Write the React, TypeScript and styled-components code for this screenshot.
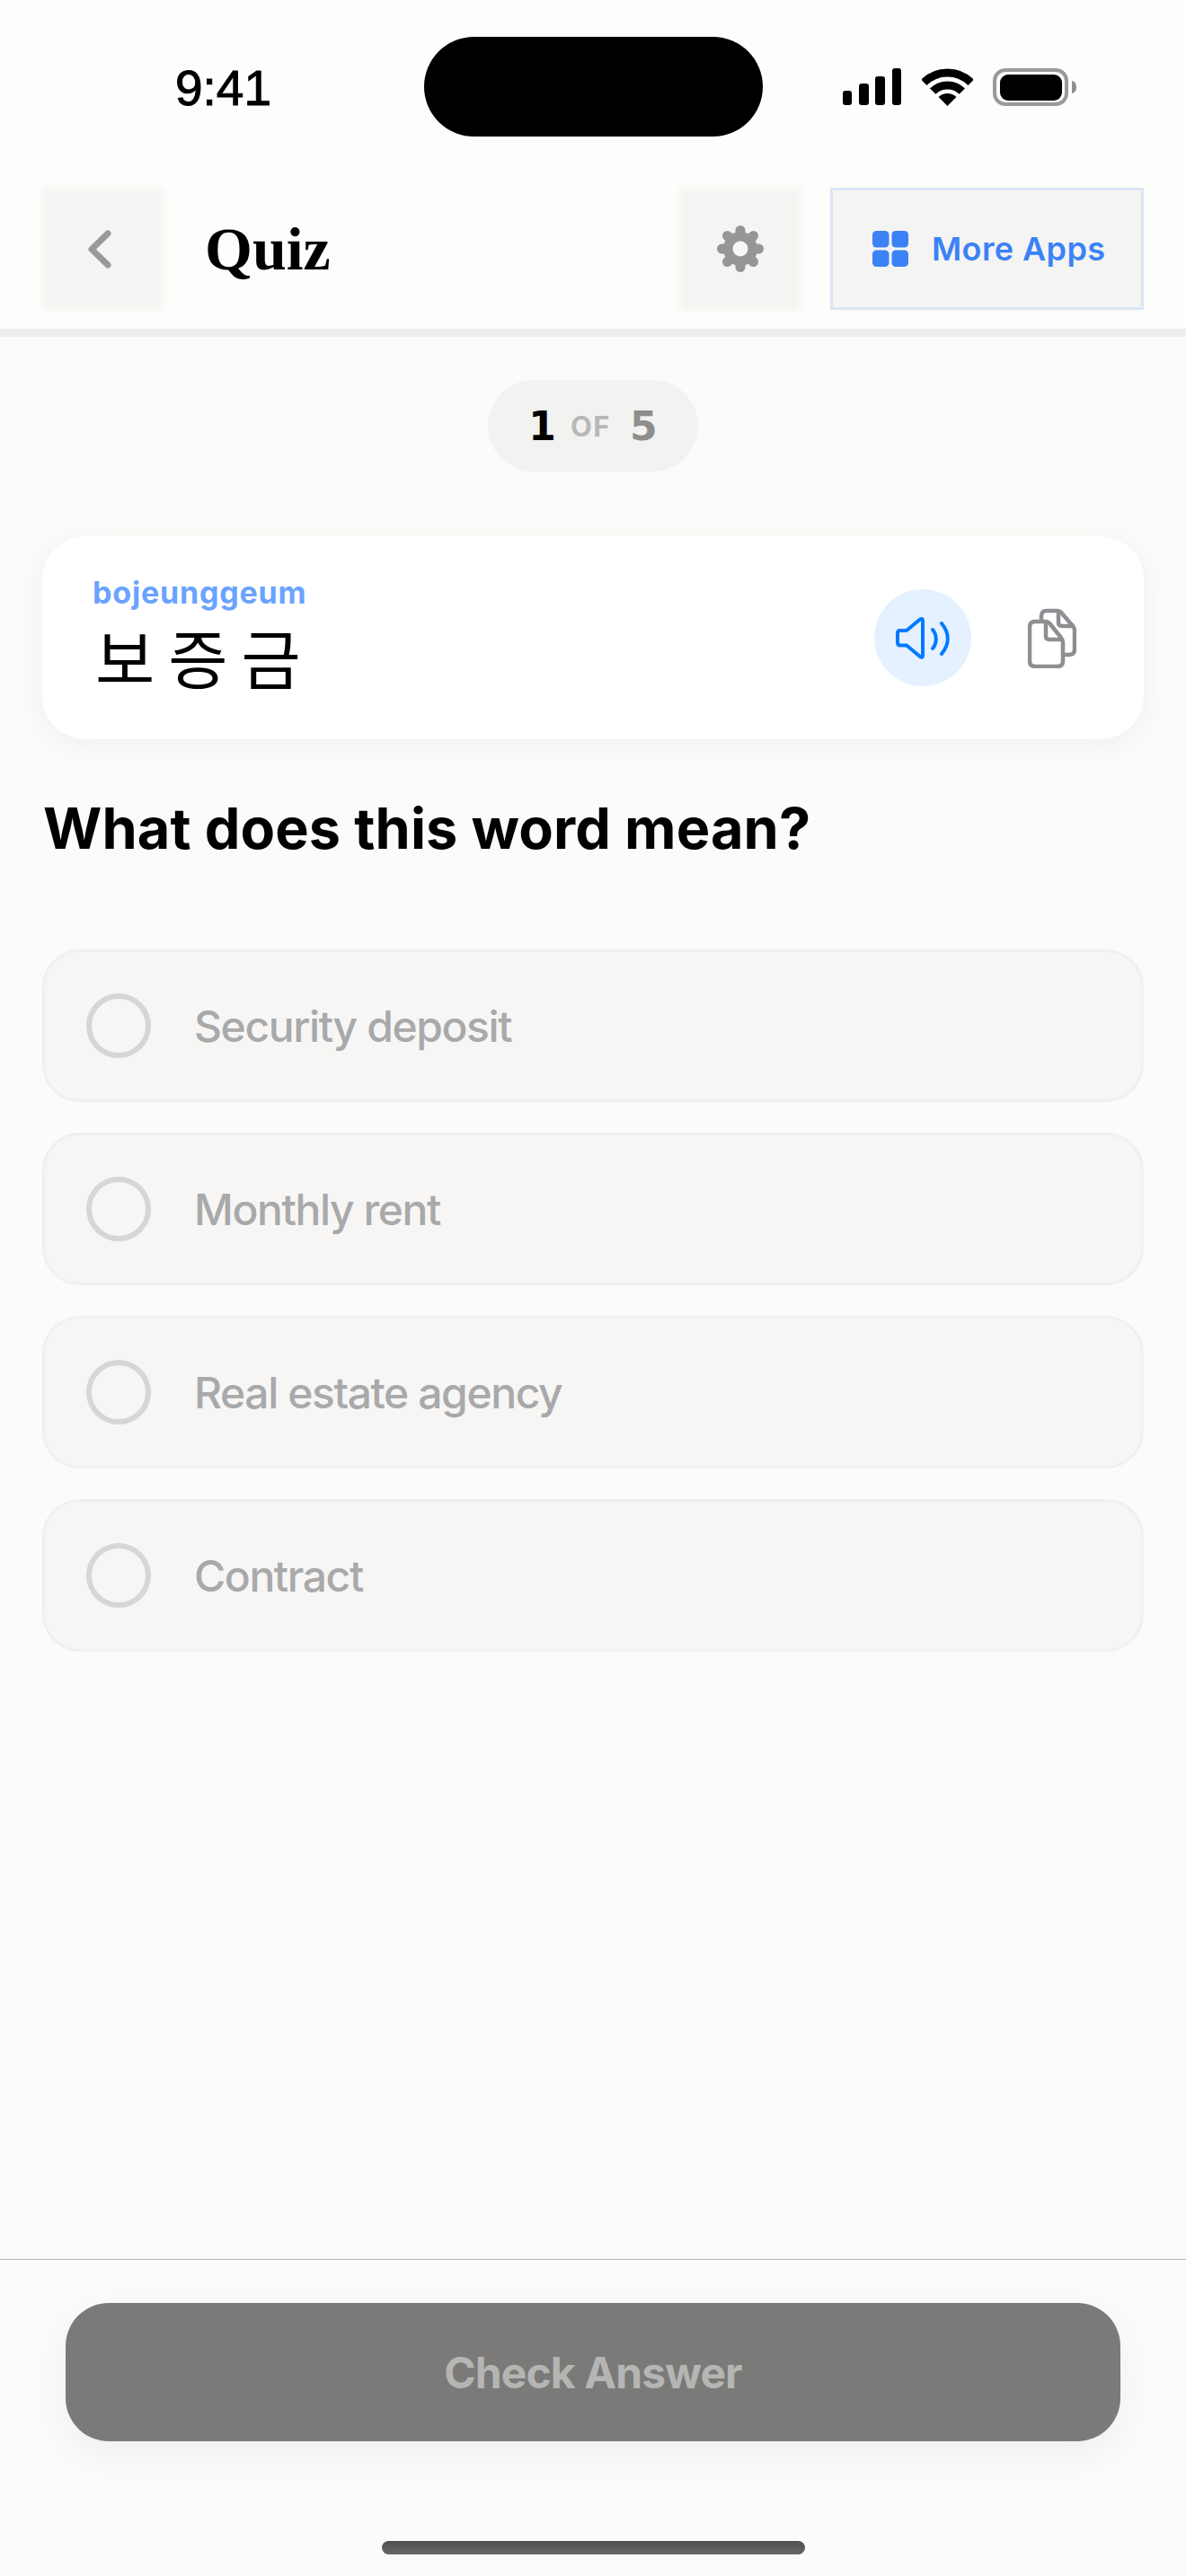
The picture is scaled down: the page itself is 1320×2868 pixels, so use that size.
import React from "react";
import styled, { createGlobalStyle } from "styled-components";

const OPTIONS = ["Security deposit", "Monthly rent", "Real estate agency", "Contract"];
const GEAR_ANGLES = [0, 45, 90, 135, 180, 225, 270, 315];

const GlobalStyle = createGlobalStyle`
  html, body {
    margin: 0;
    padding: 0;
    background: #fcfbf9;
  }
  * {
    box-sizing: border-box;
  }
`;

const Page = styled.div`
  width: 1320px;
  height: 2868px;
  display: flex;
  flex-direction: column;
  overflow: hidden;
  background: #fcfbf9;
  font-family: Inter, "Liberation Sans", sans-serif;
`;

const Top = styled.header`
  flex-shrink: 0;
  background: #fdfdfb;
  border-bottom: 9px solid #eeeeec;
`;

const StatusBar = styled.div`
  display: flex;
  align-items: center;
  padding: 41px 0 0 195px;
`;

const Time = styled.div`
  width: 277px;
  padding-top: 2px;
  font-family: "Liberation Sans", Arial, sans-serif;
  font-size: 55px;
  line-height: 60px;
  color: #000;
  -webkit-text-stroke: 1px #000;
`;

const Island = styled.div`
  width: 377px;
  height: 111px;
  border-radius: 56px;
  background: #000;
`;

const StatusIcons = styled.div`
  display: flex;
  align-items: center;
  margin-left: 89px;
  gap: 22px;
`;

const NavBar = styled.div`
  display: flex;
  align-items: center;
  height: 157px;
  margin-top: 57px;
  padding: 0 47px 21px;
`;

const IconButton = styled.button`
  position: relative;
  isolation: isolate;
  display: flex;
  align-items: center;
  justify-content: center;
  width: 134px;
  height: 136px;
  padding: 0;
  border: none;
  background: none;

  &::before {
    content: "";
    position: absolute;
    inset: 0;
    z-index: -1;
    background: #f4f4f2;
    filter: blur(3px);
  }
`;

const Title = styled.h1`
  flex: 1;
  margin: 0 0 0 47px;
  font-family: "Liberation Serif", "Times New Roman", serif;
  font-size: 68px;
  font-weight: 700;
  line-height: 80px;
  color: #000;
`;

const MoreApps = styled.button`
  display: flex;
  align-items: center;
  gap: 26px;
  width: 349px;
  height: 136px;
  margin-left: 33px;
  padding: 0 0 0 44px;
  border: 3px solid #dbe6f6;
  background: #f4f4f2;
  box-shadow: 0 2px 10px rgba(0, 0, 0, 0.025);
  font-family: Inter, sans-serif;
  font-size: 36px;
  font-weight: 600;
  letter-spacing: 0.4px;
  color: #3b82f6;
`;

const Main = styled.main`
  flex: 1;
  display: flex;
  flex-direction: column;
  padding: 48px 47px 0;
`;

const Counter = styled.div`
  align-self: center;
  display: flex;
  align-items: center;
  justify-content: center;
  width: 234px;
  height: 102px;
  border-radius: 51px;
  background: #f2f2f1;
`;

const CounterNumber = styled.span<{ $muted?: boolean }>`
  font-family: "DejaVu Sans", sans-serif;
  font-size: 44px;
  font-weight: 700;
  color: ${({ $muted }) => ($muted ? "#8e8e8f" : "#000")};
`;

const CounterOf = styled.span`
  margin: 0 21px 0 16px;
  font-size: 31px;
  font-weight: 700;
  letter-spacing: 1.5px;
  color: #b8b8b8;
`;

const WordCard = styled.section`
  display: flex;
  align-items: center;
  height: 226px;
  margin-top: 72px;
  padding: 0 75px 0 56px;
  border-radius: 48px;
  background: #fff;
  box-shadow: 0 6px 30px rgba(0, 0, 0, 0.05);
`;

const WordText = styled.div`
  flex: 1;
  display: flex;
  flex-direction: column;
`;

const Romanized = styled.div`
  margin-top: -8px;
  font-size: 34px;
  font-weight: 700;
  line-height: 40px;
  letter-spacing: 0.8px;
  color: #6aa3ff;
`;

const Hangul = styled.div`
  margin-top: 8px;
  padding-left: 3px;
  font-family: "Noto Sans CJK KR", sans-serif;
  font-size: 72px;
  line-height: 84px;
  letter-spacing: 15px;
  color: #000;
`;

const SpeakerButton = styled.button`
  display: flex;
  align-items: center;
  justify-content: center;
  width: 108px;
  height: 108px;
  margin-right: 63px;
  padding: 0;
  border: none;
  border-radius: 50%;
  background: #e5f1ff;
`;

const Question = styled.h2`
  margin: 58px 0 0;
  padding-left: 1px;
  font-size: 63px;
  font-weight: 700;
  line-height: 82px;
  letter-spacing: 0.1px;
  color: #000;
`;

const OptionList = styled.div`
  display: flex;
  flex-direction: column;
  gap: 34px;
  margin-top: 94px;
`;

const Option = styled.div`
  display: flex;
  align-items: center;
  gap: 48px;
  height: 170px;
  padding-left: 46px;
  border: 3px solid #f0f0ee;
  border-radius: 42px;
  background: #f7f6f5;
`;

const Radio = styled.span`
  width: 72px;
  height: 72px;
  border: 6px solid #d6d6d4;
  border-radius: 50%;
`;

const OptionLabel = styled.span`
  font-size: 48px;
  font-weight: 500;
  letter-spacing: -1.4px;
  color: #a9a9aa;
`;

const Footer = styled.footer`
  flex-shrink: 0;
  display: flex;
  flex-direction: column;
  align-items: center;
  height: 353px;
  padding-top: 48px;
  border-top: 1px solid #b8b8b6;
`;

const CheckButton = styled.button`
  width: 1174px;
  height: 154px;
  padding: 0;
  border: none;
  border-radius: 48px;
  background: #7b7a78;
  box-shadow: 0 14px 44px rgba(0, 0, 0, 0.05);
  font-family: Inter, sans-serif;
  font-size: 48px;
  font-weight: 700;
  letter-spacing: -0.9px;
  color: #b5b5b3;
`;

const HomeBar = styled.div`
  width: 471px;
  height: 15px;
  margin-top: 111px;
  border-radius: 8px;
  background: linear-gradient(#4f4f4e, #676766);
`;

const SignalIcon = () => (
  <svg width="65" height="41" viewBox="0 0 65 41" fill="#000">
    <rect x="0" y="25" width="10" height="16" rx="3" />
    <rect x="18" y="17" width="11" height="24" rx="3" />
    <rect x="36" y="9" width="11" height="32" rx="3" />
    <rect x="55" y="0" width="10" height="41" rx="3" />
  </svg>
);

const WifiIcon = () => (
  <svg width="57" height="42" viewBox="0 0 57 42" fill="none" stroke="#000" style={{ marginLeft: 1 }}>
    <path d="M2.3 15.8A37 37 0 0 1 54.7 15.8" strokeWidth="9" />
    <path d="M12.2 25.7A23 23 0 0 1 44.8 25.7" strokeWidth="9" />
    <path d="M28.5 42L18.6 32.1A14 14 0 0 1 38.4 32.1Z" fill="#000" stroke="none" />
  </svg>
);

const BatteryIcon = () => (
  <svg width="93" height="42" viewBox="0 0 93 42">
    <rect x="2" y="2" width="80" height="38" rx="12" fill="none" stroke="#999" strokeWidth="4" />
    <rect x="8" y="7" width="69" height="29" rx="9" fill="#000" />
    <path d="M88 14Q93 15 93 21Q93 27 88 28Z" fill="#8f8f8f" />
  </svg>
);

const ChevronIcon = () => (
  <svg width="32" height="43" viewBox="0 0 32 43" fill="none" stroke="#999997" strokeWidth="7" strokeLinecap="round" strokeLinejoin="round">
    <path d="M22 4L4 21.5L22 39" />
  </svg>
);

const GearIcon = () => (
  <svg width="52" height="52" viewBox="0 0 52 52">
    <g stroke="#979694" strokeWidth="11" strokeLinecap="round">
      {GEAR_ANGLES.map((angle) => (
        <line key={angle} x1="26" y1="26" x2="26" y2="5.5" transform={`rotate(${angle} 26 26)`} />
      ))}
    </g>
    <circle cx="26" cy="26" r="19" fill="#979694" />
    <circle cx="26" cy="26" r="8.5" fill="#f7f7f5" />
  </svg>
);

const GridIcon = () => (
  <svg width="40" height="40" viewBox="0 0 40 40" fill="#3b82f6">
    <rect x="0" y="0" width="18.5" height="18.5" rx="4.5" />
    <rect x="21.5" y="0" width="18.5" height="18.5" rx="4.5" />
    <rect x="0" y="21.5" width="18.5" height="18.5" rx="4.5" />
    <rect x="21.5" y="21.5" width="18.5" height="18.5" rx="4.5" />
  </svg>
);

const SpeakerIcon = () => (
  <svg width="60" height="47" viewBox="0 0 60 47" fill="none" stroke="#007aff" strokeWidth="4" strokeLinecap="round" strokeLinejoin="round">
    <path d="M5 15H12L27 2.5Q30 1 30 4V43Q30 46 27 44L12 31.5H5Q2 31.5 2 28.5V18Q2 15 5 15Z" />
    <path d="M41 14C46 20 46 29 41 35" />
    <path d="M51 7C60 18 60 30 51 41" />
  </svg>
);

const CopyIcon = () => (
  <svg width="54" height="67" viewBox="0 0 54 67" fill="none" stroke="#8e8e93" strokeWidth="4.5" strokeLinejoin="round">
    <path d="M15 13V9Q15 3 21 3H32Q36 3 38 6L50 20Q52 22 52 25V46Q52 52 46 52H41" />
    <path d="M34 3V16Q34 20 38 20H52" />
    <path d="M8 15H19Q23 15 25 18L37 33Q39 35 39 38V59Q39 65 33 65H8Q2 65 2 59V21Q2 15 8 15Z" />
    <path d="M20 15V31Q20 35 24 35H39" />
  </svg>
);

export default function App() {
  return (
    <Page>
      <GlobalStyle />
      <Top>
        <StatusBar>
          <Time>9:41</Time>
          <Island />
          <StatusIcons>
            <SignalIcon />
            <WifiIcon />
            <BatteryIcon />
          </StatusIcons>
        </StatusBar>
        <NavBar>
          <IconButton>
            <ChevronIcon />
          </IconButton>
          <Title>Quiz</Title>
          <IconButton>
            <GearIcon />
          </IconButton>
          <MoreApps>
            <GridIcon />
            More Apps
          </MoreApps>
        </NavBar>
      </Top>
      <Main>
        <Counter>
          <CounterNumber>1</CounterNumber>
          <CounterOf>OF</CounterOf>
          <CounterNumber $muted>5</CounterNumber>
        </Counter>
        <WordCard>
          <WordText>
            <Romanized>bojeunggeum</Romanized>
            <Hangul>보증금</Hangul>
          </WordText>
          <SpeakerButton>
            <SpeakerIcon />
          </SpeakerButton>
          <CopyIcon />
        </WordCard>
        <Question>What does this word mean?</Question>
        <OptionList>
          {OPTIONS.map((label) => (
            <Option key={label}>
              <Radio />
              <OptionLabel>{label}</OptionLabel>
            </Option>
          ))}
        </OptionList>
      </Main>
      <Footer>
        <CheckButton>Check Answer</CheckButton>
        <HomeBar />
      </Footer>
    </Page>
  );
}
